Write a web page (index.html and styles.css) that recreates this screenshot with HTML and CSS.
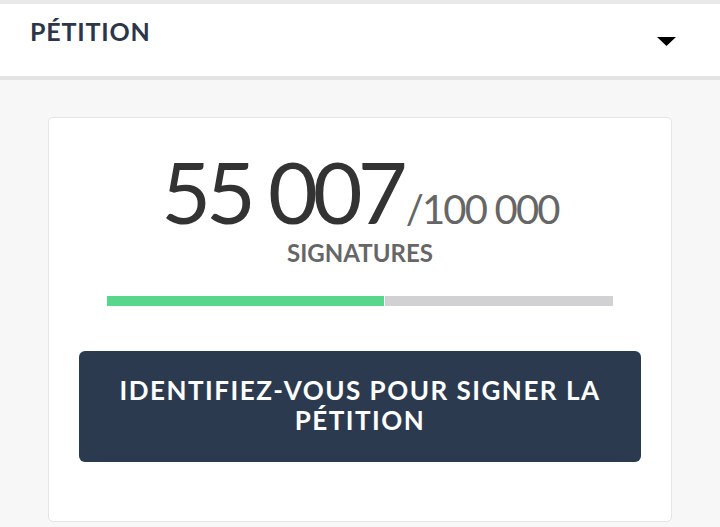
FILE: index.html
```html
<!DOCTYPE html>
<html lang="fr">
<head>
<meta charset="utf-8">
<title>Pétition</title>
<link rel="stylesheet" href="styles.css">
</head>
<body>
<div class="topline"></div>
<header class="header">
  <h1 class="title">PÉTITION</h1>
  <svg class="caret" width="19" height="9" viewBox="0 0 19 9"><polygon points="0,0 19,0 9.5,9" fill="#000"/></svg>
</header>
<main class="page">
  <section class="card">
    <div class="count"><span class="current">55 007</span><span class="goal">/100 000</span></div>
    <div class="label">SIGNATURES</div>
    <div class="bar"><div class="fill" style="width:55%"></div></div>
    <button class="cta">IDENTIFIEZ-VOUS POUR SIGNER LA PÉTITION</button>
  </section>
</main>
</body>
</html>
```
FILE: styles.css
```css
html, body { margin: 0; padding: 0; }
body {
  font-family: Lato, "Noto Sans", sans-serif;
  background: #f7f7f7;
  width: 720px;
  height: 527px;
  overflow: hidden;
}
.topline { height: 4px; background: #e9e9e9; }
.header {
  height: 72px;
  background: #fff;
  border-bottom: 4px solid #e4e4e4;
  display: flex;
  justify-content: space-between;
  padding: 0 44px 0 30px;
}
.title {
  margin: 0;
  padding-top: 11px;
  font-size: 25px;
  font-weight: 700;
  color: #2c3648;
  letter-spacing: 0.8px;
  line-height: 32px;
}
.caret { margin-top: 33px; }
.page { padding: 37px 48px 0 48px; }
.card {
  background: #fff;
  border: 1px solid #e5e5e5;
  border-radius: 5px;
  height: 405px;
  box-sizing: border-box;
  display: flex;
  flex-direction: column;
  align-items: center;
  padding: 28px 30px 0 30px;
}
.count { line-height: 90px; height: 90px; white-space: nowrap; }
.current { font-size: 86px; color: #333; letter-spacing: -5px; margin-right: 3px; }
.goal { font-size: 40px; line-height: 40px; color: #666; letter-spacing: -1.8px; }
.label {
  font-size: 24px;
  font-weight: 700;
  color: #666;
  line-height: 30px;
  margin-top: 2px;
}
.bar {
  width: 506px;
  height: 10px;
  background: #d1d1d4;
  margin-top: 28px;
}
.fill { height: 100%; background: #58d68c; border-right: 1px solid #fff; box-sizing: border-box; }
.cta {
  margin-top: 45px;
  width: 562px;
  height: 111px;
  background: #2c3a50;
  border: none;
  border-radius: 6px;
  color: #fff;
  font-family: inherit;
  font-size: 26px;
  font-weight: 700;
  letter-spacing: 1.5px;
  line-height: 30px;
  padding: 0 30px 4px;
}
```
